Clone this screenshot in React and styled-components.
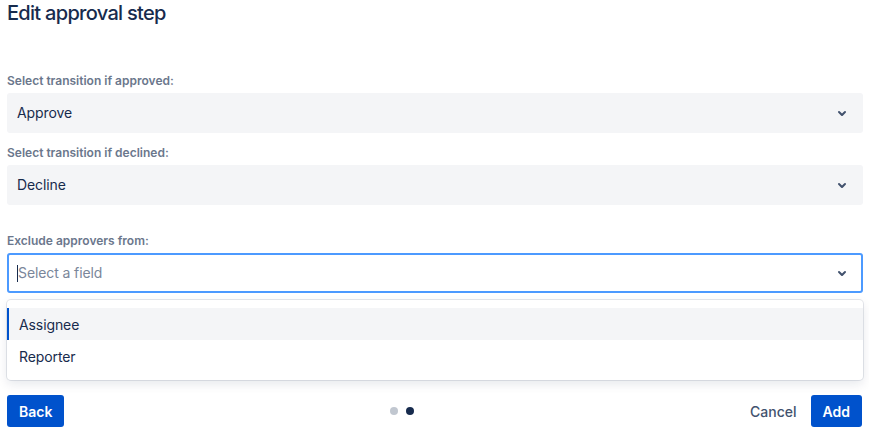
import React from "react";
import styled, { createGlobalStyle } from "styled-components";

const Global = createGlobalStyle`
  html, body { margin: 0; padding: 0; background: #fff; }
  body { font-family: Inter, "Noto Sans", "Liberation Sans", sans-serif; color: #172B4D; }
  * { box-sizing: border-box; }
`;

const Page = styled.div`
  width: 869px;
  padding: 1px 6px 0 7px;
  display: flex;
  flex-direction: column;
`;

const Title = styled.h1`
  margin: 0;
  font-size: 20px;
  line-height: 24px;
  font-weight: 500;
  color: #172B4D;
  letter-spacing: -0.7px;
`;

const Field = styled.div`
  display: flex;
  flex-direction: column;
  margin-top: ${(p) => p.$top}px;
`;

const Label = styled.label`
  font-size: 12px;
  line-height: 16px;
  font-weight: 600;
  color: #6B778C;
  margin-bottom: 4px;
`;

const Control = styled.div`
  height: 40px;
  display: flex;
  align-items: center;
  border-radius: 3px;
  padding-left: 8px;
  padding-right: 7px;
  background: ${(p) => (p.$focused ? "#fff" : "#F4F5F7")};
  border: 2px solid ${(p) => (p.$focused ? "#4C9AFF" : "#F4F5F7")};
`;

const Value = styled.div`
  flex: 1;
  font-size: 14px;
  line-height: 20px;
  letter-spacing: -0.1px;
  color: ${(p) => (p.$placeholder ? "#7A869A" : "#172B4D")};
  display: flex;
  align-items: center;
`;

const Caret = styled.span`
  display: inline-block;
  width: 1px;
  height: 17px;
  background: #172B4D;
`;

const Chevron = styled.svg`
  width: 24px;
  height: 24px;
  flex: none;
`;

const Menu = styled.div`
  margin-top: 7px;
  background: #fff;
  border-radius: 4px;
  box-shadow: 0 0 0 1px rgba(9, 30, 66, 0.1), 0 4px 11px rgba(9, 30, 66, 0.1);
  padding: 8px 0;
  display: flex;
  flex-direction: column;
`;

const Option = styled.div`
  height: 32px;
  display: flex;
  align-items: center;
  padding-left: 12px;
  font-size: 14px;
  letter-spacing: -0.1px;
  color: #172B4D;
  background: ${(p) => (p.$active ? "#F4F5F7" : "transparent")};
  box-shadow: ${(p) => (p.$active ? "inset 2px 0 0 #0052CC" : "none")};
`;

const Footer = styled.div`
  margin-top: 15px;
  display: flex;
  align-items: center;
  justify-content: space-between;
  padding-right: 1px;
`;

const Button = styled.button`
  height: 32px;
  padding: 0 ${(p) => (p.$primary ? 12 : 10)}px;
  border: none;
  border-radius: 3px;
  font-family: inherit;
  font-size: 14px;
  font-weight: ${(p) => (p.$primary ? 600 : 500)};
  background: ${(p) => (p.$primary ? "#0052CC" : "transparent")};
  color: ${(p) => (p.$primary ? "#fff" : "#42526E")};
  cursor: pointer;
`;

const Dots = styled.div`
  display: flex;
  gap: 8px;
`;

const Dot = styled.span`
  width: 8px;
  height: 8px;
  border-radius: 50%;
  background: ${(p) => (p.$active ? "#172B4D" : "#C1C7D0")};
`;

const Actions = styled.div`
  display: flex;
  gap: 4px;
`;

const ChevronIcon = () => (
  <Chevron viewBox="0 0 24 24">
    <path
      fill="#42526E"
      d="M8.292 10.293a1.009 1.009 0 000 1.419l2.939 2.965c.218.215.5.322.779.322s.556-.107.769-.322l2.93-2.955a1.01 1.01 0 000-1.419.987.987 0 00-1.406 0l-2.298 2.317-2.307-2.327a.99.99 0 00-1.406 0z"
    />
  </Chevron>
);

export default function App() {
  return (
    <>
      <Global />
      <Page>
        <Title>Edit approval step</Title>
        <Field $top={48}>
          <Label>Select transition if approved:</Label>
          <Control>
            <Value>Approve</Value>
            <ChevronIcon />
          </Control>
        </Field>
        <Field $top={12}>
          <Label>Select transition if declined:</Label>
          <Control>
            <Value>Decline</Value>
            <ChevronIcon />
          </Control>
        </Field>
        <Field $top={28}>
          <Label>Exclude approvers from:</Label>
          <Control $focused>
            <Value $placeholder>
              <Caret />
              Select a field
            </Value>
            <ChevronIcon />
          </Control>
        </Field>
        <Menu>
          <Option $active>Assignee</Option>
          <Option>Reporter</Option>
        </Menu>
        <Footer>
          <Button $primary>Back</Button>
          <Dots>
            <Dot />
            <Dot $active />
          </Dots>
          <Actions>
            <Button>Cancel</Button>
            <Button $primary>Add</Button>
          </Actions>
        </Footer>
      </Page>
    </>
  );
}
